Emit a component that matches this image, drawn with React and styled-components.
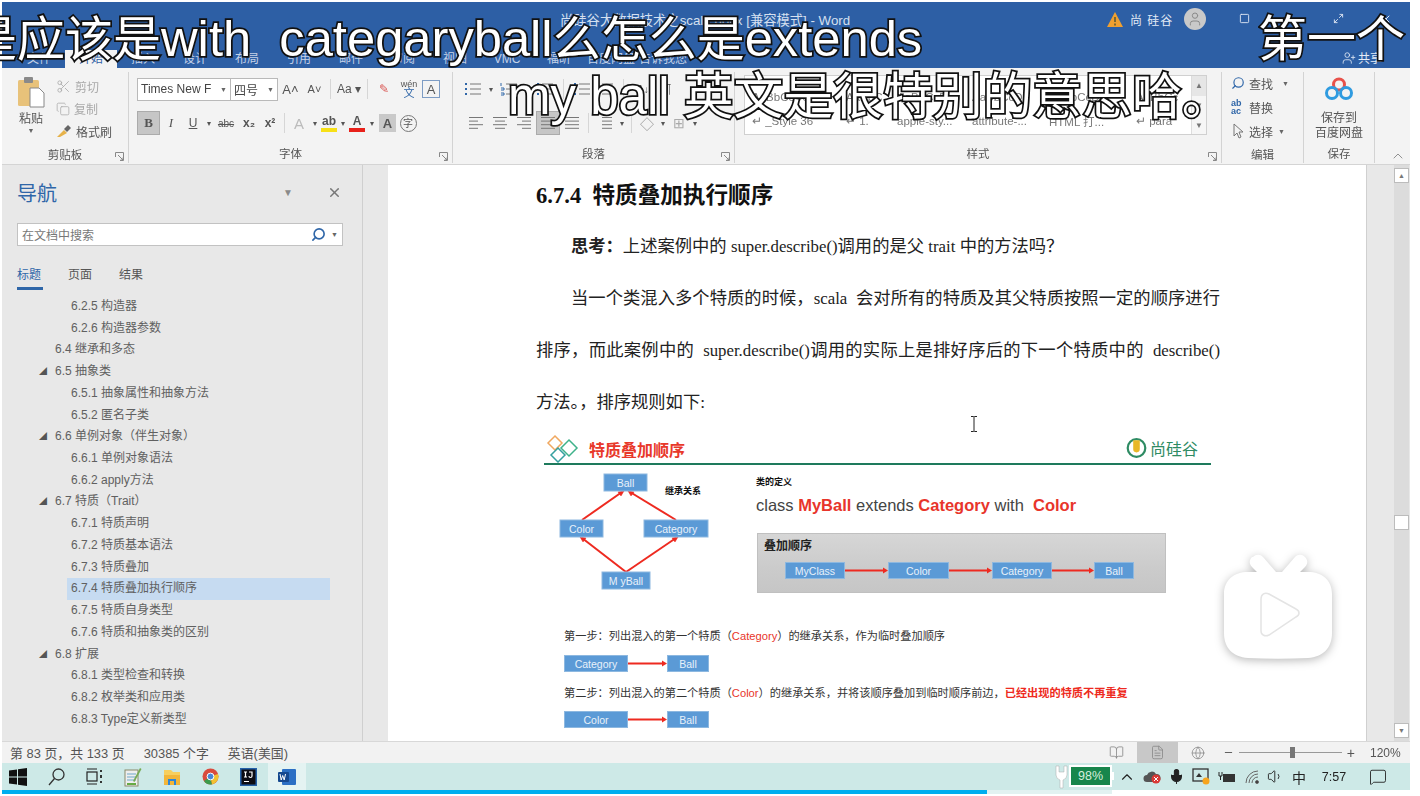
import React from 'react';
import styled, { createGlobalStyle } from 'styled-components';
import { Scissors, Copy, Search, ChevronUp, Minus, Square, X, Maximize2, UserPlus, User, Volume1, Mic, MessageSquare, BookOpen, FileText, Globe } from 'lucide-react';

const CJK = '"Liberation Sans", "Noto Sans CJK SC", sans-serif';
const SERIF = '"Liberation Serif", "Noto Sans CJK SC", serif';

const Global = createGlobalStyle`
  html, body { margin: 0; padding: 0; background: #fff; }
  body { font-family: ${CJK}; overflow: hidden; }
  * { box-sizing: border-box; }
`;

const Stage = styled.div`
  position: relative;
  width: 1420px;
  height: 796px;
  overflow: hidden;
  background: #fff;
  padding: 2px 10px 0 2px;
`;
const Win = styled.div`
  display: flex;
  flex-direction: column;
  height: 792px;
  filter: blur(0.35px);
  & > * { flex: none; }
`;

// title bar
const TitleBar = styled.div`
  height: 66px;
  background: #2d5fa5;
  color: #d5e0f0;
  font-size: 12px;
  display: flex;
  flex-direction: column;
`;
const TitleRow = styled.div`
  height: 30px;
  display: flex;
  align-items: center;
  padding-top: 4px;
`;
const Title = styled.div`
  margin-left: 558px;
  width: 293px;
  white-space: nowrap;
  font-size: 13.3px;
`;
const Account = styled.div`
  margin-left: 254px;
  display: flex;
  align-items: center;
  gap: 7px;
  color: #e4ebf6;
  white-space: nowrap;
  letter-spacing: 1px;
`;
const Avatar = styled.div`
  width: 22px;
  height: 22px;
  border-radius: 50%;
  background: #c9c9c9;
  margin-left: 4px;
  color: #8a8a8a;
  display: flex;
  align-items: center;
  justify-content: center;
`;
const WinBtns = styled.div`
  display: flex;
  margin-left: 15px;
`;
const WinBtn = styled.div`
  width: 47px;
  display: flex;
  justify-content: center;
  color: #dfe7f3;
`;
const TabRow = styled.div`
  flex: 1;
  display: flex;
  align-items: flex-end;
  padding-left: 11px;
`;
const Tab = styled.div`
  width: 52px;
  height: 18px;
  text-align: center;
  line-height: 18px;
  font-size: 12px;
  background: ${p => (p.$on ? '#f3f3f3' : 'transparent')};
  color: ${p => (p.$on ? '#2d5fa5' : '#c4d2e8')};
  white-space: nowrap;
`;
const Share = styled.div`
  margin-left: auto;
  margin-right: 28px;
  margin-bottom: 2px;
  display: flex;
  align-items: center;
  gap: 2px;
  color: #e4ebf6;
`;

// ribbon
const Ribbon = styled.div`
  height: 97px;
  background: #f3f3f3;
  border-bottom: 1px solid #d4d4d4;
  display: flex;
  padding-top: 4px;
  color: #555;
  font-size: 12px;
`;
const Group = styled.div`
  position: relative;
  width: ${p => p.$w}px;
  height: 91px;
  display: flex;
  flex-direction: column;
  border-right: 1px solid #d3d3d3;
`;
const GroupBody = styled.div`
  height: 70px;
  display: flex;
  padding: ${p => p.$pad || '0'};
  flex-direction: ${p => p.$dir || 'row'};
  align-items: ${p => p.$items || 'stretch'};
`;
const GroupLabel = styled.div`
  height: 18px;
  text-align: center;
  line-height: 18px;
  font-size: 11.5px;
  color: #555;
  margin-top: 4px;
`;
const Launcher = styled.svg`
  position: absolute;
  right: 4px;
  bottom: 2px;
`;
const Column = styled.div`
  display: flex;
  flex-direction: column;
  align-items: ${p => p.$align || 'flex-start'};
  gap: ${p => p.$gap || 0}px;
  margin-left: ${p => p.$ml || 0}px;
`;
const Row = styled.div`
  display: flex;
  align-items: center;
  height: ${p => p.$h || 22}px;
  gap: ${p => p.$gap || 0}px;
  margin-top: ${p => p.$mt || 0}px;
  margin-left: ${p => p.$ml || 0}px;
`;
const SmallItem = styled.div`
  display: flex;
  align-items: center;
  gap: 4px;
  height: 22px;
  color: ${p => (p.$dim ? '#a9a9a9' : '#555')};
  font-size: 12px;
  white-space: nowrap;
`;
const PasteLabel = styled.span`
  margin-top: 1px;
`;
const Field = styled.div`
  width: ${p => p.$w}px;
  height: 23px;
  border: 1px solid #b9b9b9;
  background: #fff;
  display: flex;
  align-items: center;
  padding: 0 3px;
  font-size: 12px;
  color: #444;
  white-space: nowrap;
  overflow: hidden;
  margin-left: -1px;
  &:first-child { margin-left: 0; }
`;
const Caret = styled.span`
  margin-left: ${p => (p.$ml === undefined ? 'auto' : p.$ml + 'px')};
  margin-top: ${p => p.$mt || 0}px;
  font-size: 7px;
  color: #666;
`;
const Tool = styled.div`
  width: ${p => p.$w || 22}px;
  height: ${p => p.$h || 24}px;
  display: flex;
  align-items: center;
  justify-content: center;
  font-family: ${p => (p.$serif ? SERIF : CJK)};
  font-weight: ${p => (p.$bold ? 700 : 400)};
  font-style: ${p => (p.$it ? 'italic' : 'normal')};
  text-decoration: ${p => (p.$un ? 'underline' : p.$strike ? 'line-through' : 'none')};
  background: ${p => (p.$on ? '#c6c6c6' : p.$bg || 'transparent')};
  border: ${p => (p.$on ? '1px solid #ababab' : p.$line ? '1px solid #7d9cc4' : 'none')};
  color: ${p => p.$color || '#555'};
  font-size: ${p => p.$fs || 12}px;
  flex: none;
`;
const Sep = styled.div`
  width: 1px;
  height: 20px;
  background: #d6d6d6;
  margin: 0 4px;
`;
const Swatch = styled.div`
  display: flex;
  flex-direction: column;
  align-items: center;
  font-size: 12px;
  line-height: 13px;
  font-weight: 700;
  color: #555;
  &::after {
    content: '';
    width: 16px;
    height: 4px;
    background: ${p => p.$c};
  }
`;
const Pinyin = styled.span`
  text-align: center;
  line-height: 9px;
  i { font-style: normal; font-size: 11px; color: #2f66a8; }
`;
const Circled = styled.span`
  border: 1px solid #777;
  border-radius: 50%;
  width: 17px;
  height: 17px;
  text-align: center;
  line-height: 15px;
`;
const Gallery = styled.div`
  margin: 3px 0 0 9px;
  width: 463px;
  height: 60px;
  background: #fff;
  border: 1px solid #d0d0d0;
  display: flex;
`;
const GalleryItems = styled.div`
  flex: 1;
  display: grid;
  grid-template-columns: 94px 51px 75px 77px 87px 1fr;
  grid-template-rows: 24px 24px;
  align-items: center;
  font-size: 11.5px;
  color: #777;
  padding: 9px 0 2px 7px;
  white-space: nowrap;
`;
const GalleryScroll = styled.div`
  width: 15px;
  border-left: 1px solid #ddd;
  display: grid;
  grid-template-rows: 1fr 1fr 1fr;
  color: #777;
  font-size: 8px;
  line-height: 20px;
  text-align: center;
  background: #f6f6f6;
`;
const GalleryUp = styled.span`
  background: #e6e6e6;
`;
const ReplaceMark = styled.span`
  font-size: 9px;
  line-height: 8px;
  color: #2f66a8;
  font-weight: 700;
  width: 14px;
`;
const SaveLabel = styled.div`
  text-align: center;
  line-height: 15px;
  font-size: 12px;
  color: #555;
  margin-top: 10px;
`;
const Collapse = styled.div`
  flex: 1;
  display: flex;
  justify-content: flex-end;
  align-items: flex-end;
  padding: 0 4px 0 0;
  height: 92px;
  color: #777;
`;

// main
const Main = styled.div`
  height: 576px;
  display: flex;
`;
const Nav = styled.div`
  width: 361px;
  background: #e8e8e8;
  border-right: 1px solid #cfcfcf;
  padding: 13px 20px 0 15px;
  color: #555;
`;
const NavHead = styled.div`
  display: flex;
  align-items: center;
  height: 28px;
  color: #2f66a8;
  font-size: 20px;
`;
const NavDrop = styled.span`
  margin-left: auto;
  margin-right: 34px;
  color: #8a8a8a;
  font-size: 10px;
`;
const SearchBox = styled.div`
  margin-top: 17px;
  height: 23px;
  width: 326px;
  background: #fff;
  border: 1px solid #c2c2c2;
  display: flex;
  align-items: center;
  padding: 0 4px;
  font-size: 12px;
  color: #777;
  gap: 2px;
`;
const NavTabs = styled.div`
  display: flex;
  margin-top: 19px;
  height: 26px;
  font-size: 12px;
`;
const NavTab = styled.div`
  width: 51px;
  color: ${p => (p.$on ? '#2f66a8' : '#555')};
  position: relative;
  &::after {
    content: '';
    display: ${p => (p.$on ? 'block' : 'none')};
    position: absolute;
    left: 0;
    top: 22px;
    width: 26px;
    height: 3px;
    background: #2f66a8;
  }
`;
const Tree = styled.div`
  margin-top: 5px;
  margin-right: 12px;
`;
const TreeRow = styled.div`
  height: 21.72px;
  line-height: 21.72px;
  font-size: 12px;
  color: #606060;
  white-space: nowrap;
  padding-left: ${p => (p.$on ? 4 : p.$lv === 3 ? 54 : 38)}px;
  margin-left: ${p => (p.$on ? 50 : 0)}px;
  background: ${p => (p.$on ? '#c6dbf1' : 'transparent')};
  position: relative;
`;
const TreeArrow = styled.span`
  position: absolute;
  left: 22px;
  top: 0;
  font-size: 8px;
  color: #555;
`;
const DocArea = styled.div`
  width: 1047px;
  display: flex;
  background: #e8e8e8;
`;
const Page = styled.div`
  margin-left: 25px;
  width: 978px;
  height: 576px;
  background: #fff;
  padding: 15px 0 0 148px;
  overflow: hidden;
  font-family: ${SERIF};
  color: #222;
  font-size: 17.3px;
`;
const Heading = styled.div`
  height: 31px;
  line-height: 31px;
  font-size: 22.6px;
  font-weight: 700;
  color: #111;
`;
const TextLine = styled.div`
  width: 684px;
  height: 52px;
  line-height: 52px;
  white-space: pre;
  margin-top: ${p => p.$mt || 0}px;
  padding-left: ${p => (p.$indent ? 35 : 0)}px;
  text-align: justify;
  text-align-last: ${p => (p.$just ? 'justify' : 'left')};
  b { font-weight: 700; }
`;
const En = styled.span`
  font-size: 16.8px;
`;
const Figure = styled.div`
  margin: 4px 0 0 8px;
  width: 667px;
  font-family: ${CJK};
`;
const FigHead = styled.div`
  height: 32px;
  border-bottom: 2px solid #1e7a5c;
  display: flex;
  align-items: center;
  padding: 0 13px 0 1px;
`;
const FigTitle = styled.div`
  margin-left: 10px;
  color: #e8382a;
  font-weight: 700;
  font-size: 16px;
  padding-top: 2px;
`;
const Brand = styled.div`
  margin-left: auto;
  display: flex;
  align-items: center;
  gap: 3px;
  color: #2e8b63;
  font-size: 16px;
`;
const FigTop = styled.div`
  display: flex;
  margin-top: 5px;
`;
const DefCol = styled.div`
  margin-left: 22px;
  display: flex;
  flex-direction: column;
`;
const DefLabel = styled.div`
  font-size: 9px;
  font-weight: 700;
  height: 14px;
  line-height: 14px;
  margin-top: 5px;
  color: #111;
`;
const DefLine = styled.div`
  margin-top: 5px;
  height: 22px;
  line-height: 22px;
  font-size: 16.5px;
  color: #444;
  white-space: pre;
  b { color: #e8352b; }
`;
const OrderPanel = styled.div`
  margin: 17px 0 0 1px;
  width: 409px;
  height: 60px;
  background: linear-gradient(180deg, #d6d6d6, #cbcbcb 60%, #c6c6c6);
  border: 1px solid #c0c0c0;
  padding: 4px 0 0 6px;
`;
const OrderLabel = styled.div`
  font-size: 12px;
  font-weight: 700;
  color: #222;
  height: 16px;
  line-height: 16px;
`;
const Flow = styled.div`
  display: flex;
  align-items: center;
  margin-left: ${p => p.$ml || 0}px;
  margin-top: ${p => p.$mt || 0}px;
`;
const Box = styled.div`
  width: ${p => p.$w}px;
  height: 17px;
  line-height: 16px;
  text-align: center;
  font-size: 10.5px;
  background: #5b9ad6;
  color: #e8f1fa;
  border: 1px solid #8db8e0;
  flex: none;
`;
const Steps = styled.div`
  padding-left: 20px;
  margin-top: 32px;
`;
const StepText = styled.div`
  height: 16px;
  line-height: 16px;
  font-size: 11.2px;
  color: #333;
  white-space: nowrap;
  margin-top: ${p => p.$mt || 0}px;
  em { font-style: normal; color: #e8352b; }
  b { color: #ee2a20; }
`;
const Scroll = styled.div`
  width: 44px;
  border-left: 1px solid #d0d0d0;
  padding: 0 1px 0 27px;
`;
const ScrollTrack = styled.div`
  width: 15px;
  height: 100%;
  background: #dcdcdc;
  padding: 3px 0;
  display: flex;
  flex-direction: column;
  align-items: center;
`;
const ScrollBtn = styled.div`
  width: 15px;
  height: 15px;
  background: #fff;
  border: 1px solid #bcbcbc;
  color: #777;
  font-size: 7px;
  line-height: 13px;
  text-align: center;
  margin-top: ${p => (p.$mt === undefined ? 0 : p.$mt)};
`;

// status bar
const Status = styled.div`
  height: 22px;
  background: #f2f2f2;
  border-top: 1px solid #d8d8d8;
  display: flex;
  align-items: center;
  padding-left: 8px;
  font-size: 12.9px;
  color: #555;
  white-space: pre;
`;
const StatusItem = styled.span`
  margin-right: 19px;
`;
const StatusRight = styled.div`
  margin-left: auto;
  display: flex;
  align-items: center;
  height: 100%;
  padding-right: 4px;
`;
const ViewBtn = styled.div`
  width: 41px;
  height: 100%;
  display: flex;
  align-items: center;
  justify-content: center;
  color: #888;
  background: ${p => (p.$on ? '#c8c8c8' : 'transparent')};
`;
const ZoomMinus = styled.span`
  display: flex;
  margin-left: 4px;
`;
const Slider = styled.div`
  position: relative;
  width: 103px;
  height: 1px;
  background: #999;
  margin: 0 5px;
  &::after {
    content: '';
    position: absolute;
    left: 51px;
    top: -5px;
    width: 5px;
    height: 11px;
    background: #777;
  }
`;
const ZoomPlus = styled.span`
  font-size: 14px;
`;
const Pct = styled.div`
  margin-left: 15px;
  width: 36px;
  font-size: 12px;
`;

// taskbar
const Taskbar = styled.div`
  height: 27px;
  background: #cde9e7;
  display: flex;
  align-items: center;
  padding-right: 3px;
`;
const TaskSlot = styled.div`
  width: ${p => p.$w || 38.4}px;
  height: 100%;
  flex: none;
  display: flex;
  align-items: center;
  justify-content: center;
  background: ${p => (p.$on ? '#e4f3f2' : 'transparent')};
  color: ${p => p.$color || '#222'};
  font-size: ${p => p.$fs || 12}px;
`;
const TaskLeft = styled.div`
  display: flex;
  height: 100%;
  margin-left: -3px;
`;
const Tray = styled.div`
  margin-left: auto;
  display: flex;
  height: 100%;
`;
const Battery = styled.div`
  position: relative;
  width: 43px;
  height: 22px;
  margin: 2px 2px 0 0;
  background: #17864c;
  border: 2px solid #fff;
  color: #d6eedd;
  font-size: 12.5px;
  line-height: 18px;
  text-align: center;
  &::after {
    content: '';
    position: absolute;
    right: -4px;
    top: 5px;
    width: 2px;
    height: 8px;
    background: #fff;
  }
`;
const Progress = styled.div`
  height: 4px;
  background: linear-gradient(90deg, #00aeef 985px, #e2f2f1 985px, #e2f2f1 1110px, transparent 1110px);
`;

// overlays
const Sub = styled.div`
  position: absolute;
  left: ${p => p.$x}px;
  top: ${p => p.$y}px;
  height: 52px;
  line-height: 52px;
  font-size: ${p => p.$fs || 48}px;
  font-family: ${CJK};
  color: #fff;
  white-space: pre;
  -webkit-text-stroke: 3.5px #111;
  paint-order: stroke fill;
`;
const SubEn = styled.span`
  font-size: ${p => p.$fs || 50.7}px;
`;
const IBeam = styled.svg`
  position: absolute;
  left: 970px;
  top: 416px;
`;
const TvMark = styled.svg`
  position: absolute;
  left: 1212px;
  top: 545px;
  filter: drop-shadow(0 2px 5px rgba(0, 0, 0, 0.28));
`;

const treeItems = [
  [3, '6.2.5 构造器'], [3, '6.2.6 构造器参数'], [2, '6.4 继承和多态'],
  [2, '6.5 抽象类', 1], [3, '6.5.1 抽象属性和抽象方法'], [3, '6.5.2 匿名子类'],
  [2, '6.6 单例对象（伴生对象）', 1], [3, '6.6.1 单例对象语法'], [3, '6.6.2 apply方法'],
  [2, '6.7 特质（Trait）', 1], [3, '6.7.1 特质声明'], [3, '6.7.2 特质基本语法'], [3, '6.7.3 特质叠加'],
  [3, '6.7.4 特质叠加执行顺序', 0, 1], [3, '6.7.5 特质自身类型'], [3, '6.7.6 特质和抽象类的区别'],
  [2, '6.8 扩展', 1], [3, '6.8.1 类型检查和转换'], [3, '6.8.2 枚举类和应用类'], [3, '6.8.3 Type定义新类型'],
];

const tabs = ['文件', '开始', '插入', '设计', '布局', '引用', '邮件', '审阅', '视图', 'VMC', '福昕', '百度网盘', '告诉我您'];
const styleItems = ['AaBbCcDc', 'AaBbC', 'AaBbCcDc', 'AaBbCcDc', 'AaBbCcDc', 'AaBbCc', '↵ _Style 36', '↵ 1.', 'apple-sty...', 'attribute-...', 'HTML 打...', '↵ para'];

const LauncherMark = () => (
  <Launcher width="9" height="9" viewBox="0 0 9 9" fill="none" stroke="#888">
    <path d="M.5 5V.5H8.5V8.5H5M3 3l5 5M5.5 8h2.5V5.5" />
  </Launcher>
);

const ListIcon = ({ w = 18, num }) => (
  <svg width={w} height="16" viewBox="0 0 18 16" stroke="#777" fill="none">
    <path d="M6 3h11M6 8h11M6 13h11" />
    {num ? <path d="M1 2v3M1 7h3v2H1M1 12h3v2H1" stroke="#2f66a8" /> : <path d="M1 3h2M1 8h2M1 13h2" stroke="#2f66a8" strokeWidth="2" />}
  </svg>
);

const AlignIcon = ({ lines, on }) => (
  <Tool $w={24} $on={on}>
    <svg width="16" height="14" viewBox="0 0 16 14" stroke="#777" fill="none">
      {lines.map((l, i) => (
        <path key={i} d={`M${l[0]} ${1.5 + i * 3.6}H${l[1]}`} />
      ))}
    </svg>
  </Tool>
);

const FlowArrow = ({ w }) => (
  <svg width={w} height="9" viewBox={`0 0 ${w} 9`} style={{ flex: 'none' }}>
    <path d={`M0 4.5H${w - 4}`} stroke="#ee2a20" strokeWidth="2" />
    <path d={`M${w - 5} 1.5L${w} 4.5L${w - 5} 7.5Z`} fill="#ee2a20" />
  </svg>
);

const DiamondDiagram = () => {
  const blue = '#5b9ad6';
  const boxes = [
    [60, 4, 43, 17, 'Ball'],
    [16, 50, 43, 17, 'Color'],
    [100, 50, 64, 17, 'Category'],
    [58, 102, 48, 17, 'M yBall'],
  ];
  return (
    <svg width="190" height="126" viewBox="0 0 190 126" style={{ flex: 'none' }}>
      <g stroke="#ee2a20" strokeWidth="2" fill="#ee2a20">
        <path d="M38 50L78 22" fill="none" />
        <path d="M132 50L86 22" fill="none" />
        <path d="M82 102L38 68" fill="none" />
        <path d="M82 102L132 68" fill="none" />
        <path d="M80 21l-6 1 3 4zM84 21l6 1-3 4zM36 67l6 1-3 4zM134 67l-6 1 3 4z" strokeWidth="0.5" />
      </g>
      {boxes.map(([x, y, w, h, t]) => (
        <g key={t}>
          <rect x={x} y={y} width={w} height={h} fill={blue} stroke="#8db8e0" />
          <text x={x + w / 2} y={y + 12.5} textAnchor="middle" fontSize="10.5" fill="#e8f1fa" fontFamily="Liberation Sans">{t}</text>
        </g>
      ))}
      <text x="121" y="24" fontSize="9" fontWeight="700" fill="#111" fontFamily="Noto Sans CJK SC">继承关系</text>
    </svg>
  );
};

export default function App() {
  return (
    <Stage>
      <Global />
      <Win>
        <TitleBar>
          <TitleRow>
            <Title>尚硅谷大数据技术之scala.docx [兼容模式] - Word</Title>
            <Account>
              <svg width="16" height="15" viewBox="0 0 16 15">
                <path d="M8 0L16 15H0Z" fill="#f0a030" />
                <path d="M8 5v5M8 11.5v2" stroke="#553" strokeWidth="1.5" />
              </svg>
              <span>尚 硅谷</span>
              <Avatar><User size={16} strokeWidth={1.5} /></Avatar>
            </Account>
            <WinBtns>
              <WinBtn><Square size={11} /></WinBtn>
              <WinBtn><Minus size={12} /></WinBtn>
              <WinBtn><Maximize2 size={11} /></WinBtn>
              <WinBtn><X size={12} /></WinBtn>
            </WinBtns>
          </TitleRow>
          <TabRow>
            {tabs.map((t, i) => <Tab key={t} $on={i === 1}>{t}</Tab>)}
            <Share><UserPlus size={14} strokeWidth={1.4} />共享</Share>
          </TabRow>
        </TitleBar>

        <Ribbon>
          <Group $w={127}>
            <GroupBody $pad="4px 0 0 15px">
              <Column $align="center">
                <svg width="28" height="32" viewBox="0 0 28 32">
                  <rect x="1" y="4" width="21" height="26" rx="1.5" fill="#e8c27a" />
                  <rect x="7" y="1" width="9" height="6" rx="1" fill="#8a8a8a" />
                  <path d="M13 12h9l5 5v14H13Z" fill="#fff" stroke="#888" />
                </svg>
                <PasteLabel>粘贴</PasteLabel>
                <Caret $ml={0} $mt={1}>▼</Caret>
              </Column>
              <Column $ml={11} $gap={1}>
                <SmallItem $dim><Scissors size={15} strokeWidth={1.3} />剪切</SmallItem>
                <SmallItem $dim><Copy size={14} strokeWidth={1.3} />复制</SmallItem>
                <SmallItem>
                  <svg width="16" height="14" viewBox="0 0 16 14">
                    <path d="M1 13l7-7 3 3-7 4z" fill="#e6b24a" />
                    <path d="M8 5l4-4 3 3-4 4z" fill="#666" />
                  </svg>
                  格式刷
                </SmallItem>
              </Column>
            </GroupBody>
            <GroupLabel>剪贴板</GroupLabel>
            <LauncherMark />
          </Group>

          <Group $w={324}>
            <GroupBody $pad="5px 0 0 8px">
              <Column>
                <Row $h={24}>
                  <Field $w={94}>Times New F<Caret>▼</Caret></Field>
                  <Field $w={48}>四号<Caret>▼</Caret></Field>
                  <Tool $fs={13} $w={25}>A˄</Tool>
                  <Tool $fs={11} $w={23}>A˅</Tool>
                  <Sep />
                  <Tool $w={28}>Aa ▾</Tool>
                  <Sep />
                  <Tool $color="#d9534f" $w={24}>✎</Tool>
                  <Tool $w={26} $fs={9}><Pinyin>wén<br /><i>文</i></Pinyin></Tool>
                  <Tool $w={18} $h={18} $fs={13} $line>A</Tool>
                </Row>
                <Row $h={24} $mt={10}>
                  <Tool $bold $on $serif $w={23} $fs={13}>B</Tool>
                  <Tool $it $serif $w={22} $fs={13}>I</Tool>
                  <Tool $un $w={22}>U</Tool>
                  <Tool $w={10} $fs={8}>▾</Tool>
                  <Tool $w={24} $fs={10} $strike>abc</Tool>
                  <Tool $bold $w={22}>x₂</Tool>
                  <Tool $bold $w={20}>x²</Tool>
                  <Sep />
                  <Tool $w={20} $fs={15} $color="#bbb">A</Tool>
                  <Tool $w={12} $fs={8}>▾</Tool>
                  <Swatch $c="#f7e017">ab</Swatch>
                  <Tool $w={12} $fs={8}>▾</Tool>
                  <Swatch $c="#e8211a">A</Swatch>
                  <Tool $w={14} $fs={8}>▾</Tool>
                  <Tool $w={17} $h={18} $fs={13} $bold $bg="#c9c9c9">A</Tool>
                  <Tool $w={24} $fs={10}><Circled>字</Circled></Tool>
                </Row>
              </Column>
            </GroupBody>
            <GroupLabel>字体</GroupLabel>
            <LauncherMark />
          </Group>

          <Group $w={282}>
            <GroupBody $pad="5px 0 0 11px">
              <Column>
                <Row $h={24} $gap={5}>
                  <ListIcon />
                  <Tool $w={8} $fs={8}>▾</Tool>
                  <ListIcon num />
                  <Tool $w={8} $fs={8}>▾</Tool>
                  <ListIcon />
                  <Sep />
                  <ListIcon />
                  <ListIcon />
                  <Sep />
                  <Tool $w={20} $fs={10}>A↓</Tool>
                  <Tool $w={20} $fs={12}>¶</Tool>
                </Row>
                <Row $h={24} $mt={10}>
                  <AlignIcon lines={[[1, 15], [1, 10], [1, 15], [1, 10]]} />
                  <AlignIcon lines={[[1, 15], [3, 13], [1, 15], [3, 13]]} />
                  <AlignIcon lines={[[1, 15], [6, 15], [1, 15], [6, 15]]} />
                  <AlignIcon on lines={[[1, 15], [1, 15], [1, 15], [1, 15]]} />
                  <AlignIcon lines={[[1, 15], [1, 15], [1, 15], [1, 15]]} />
                  <Sep />
                  <AlignIcon lines={[[5, 15], [5, 15], [5, 15], [5, 15]]} />
                  <Tool $w={10} $fs={8}>▾</Tool>
                  <Sep />
                  <Tool $w={22} $fs={14} $color="#999">◇</Tool>
                  <Tool $w={10} $fs={8}>▾</Tool>
                  <Tool $w={22} $fs={14} $color="#aaa">⊞</Tool>
                  <Tool $w={10} $fs={8}>▾</Tool>
                </Row>
              </Column>
            </GroupBody>
            <GroupLabel>段落</GroupLabel>
            <LauncherMark />
          </Group>

          <Group $w={487}>
            <GroupBody>
              <Gallery>
                <GalleryItems>
                  {styleItems.map((s, i) => <span key={i}>{s}</span>)}
                </GalleryItems>
                <GalleryScroll>
                  <GalleryUp>▲</GalleryUp>
                  <span>▼</span>
                  <span>▼</span>
                </GalleryScroll>
              </Gallery>
            </GroupBody>
            <GroupLabel>样式</GroupLabel>
            <LauncherMark />
          </Group>

          <Group $w={82}>
            <GroupBody $pad="0 0 0 9px">
              <Column $gap={2}>
                <SmallItem>
                  <Search size={14} color="#2f66a8" strokeWidth={2} style={{ transform: 'scaleX(-1)' }} />查找 <Caret $ml={5}>▼</Caret>
                </SmallItem>
                <SmallItem>
                  <ReplaceMark>ab<br />ac</ReplaceMark>替换
                </SmallItem>
                <SmallItem>
                  <svg width="14" height="16" viewBox="0 0 14 16" fill="none" stroke="#777"><path d="M3 1v12l3-3 2 5 2-1-2-5h4z" /></svg>
                  选择 <Caret $ml={1}>▼</Caret>
                </SmallItem>
              </Column>
            </GroupBody>
            <GroupLabel>编辑</GroupLabel>
          </Group>

          <Group $w={71}>
            <GroupBody $pad="5px 0 0 0" $dir="column" $items="center">
              <svg width="28" height="24" viewBox="0 0 28 24" fill="none">
                <circle cx="14" cy="7.5" r="5.5" stroke="#e8514a" strokeWidth="3" />
                <circle cx="7" cy="16" r="5.5" stroke="#2f9be0" strokeWidth="3" />
                <circle cx="21" cy="16" r="5.5" stroke="#2f9be0" strokeWidth="3" />
              </svg>
              <SaveLabel>保存到<br />百度网盘</SaveLabel>
            </GroupBody>
            <GroupLabel>保存</GroupLabel>
          </Group>
          <Collapse><ChevronUp size={16} strokeWidth={1.2} /></Collapse>
        </Ribbon>

        <Main>
          <Nav>
            <NavHead>
              导航
              <NavDrop>▼</NavDrop>
              <X size={15} color="#777" strokeWidth={2.4} />
            </NavHead>
            <SearchBox>
              在文档中搜索
              <Search size={15} color="#2f66a8" strokeWidth={2.6} style={{ marginLeft: 'auto', transform: 'scaleX(-1)' }} />
              <Caret $ml={3}>▼</Caret>
            </SearchBox>
            <NavTabs>
              <NavTab $on>标题</NavTab>
              <NavTab>页面</NavTab>
              <NavTab>结果</NavTab>
            </NavTabs>
            <Tree>
              {treeItems.map(([lv, text, arrow, on]) => (
                <TreeRow key={text} $lv={lv} $on={on}>
                  {arrow ? <TreeArrow>◢</TreeArrow> : null}
                  {text}
                </TreeRow>
              ))}
            </Tree>
          </Nav>
          <DocArea>
            <Page>
              <Heading>6.7.4&nbsp;&nbsp;特质叠加执行顺序</Heading>
              <TextLine $indent $mt={10}><b>思考：</b>上述案例中的 <En>super.describe()</En>调用的是父 <En>trait</En> 中的方法吗？</TextLine>
              <TextLine $indent $just>当一个类混入多个特质的时候，<En>scala</En>  会对所有的特质及其父特质按照一定的顺序进行</TextLine>
              <TextLine $just>排序，而此案例中的  <En>super.describe()</En>调用的实际上是排好序后的下一个特质中的  <En>describe()</En></TextLine>
              <TextLine>方法。，排序规则如下:</TextLine>
              <Figure>
                <FigHead>
                  <svg width="34" height="30" viewBox="0 0 34 30" fill="none" strokeWidth="1.5">
                    <path d="M10 3l7 7-7 7-7-7z" stroke="#f0a860" />
                    <path d="M24 7l8 8-8 8-8-8z" stroke="#3fb28a" />
                    <path d="M13 15l7 7-7 7-7-7z" stroke="#35a0a0" />
                  </svg>
                  <FigTitle>特质叠加顺序</FigTitle>
                  <Brand>
                    <svg width="21" height="22" viewBox="0 0 18 20">
                      <circle cx="9" cy="10" r="8" fill="none" stroke="#2e8b63" strokeWidth="2" />
                      <path d="M6 3v8a3 3 0 0 0 6 0V3Z" fill="#e8b828" />
                    </svg>
                    尚硅谷
                  </Brand>
                </FigHead>
                <FigTop>
                  <DiamondDiagram />
                  <DefCol>
                    <DefLabel>类的定义</DefLabel>
                    <DefLine>class <b>MyBall</b> extends <b>Category</b> with  <b>Color</b></DefLine>
                    <OrderPanel>
                      <OrderLabel>叠加顺序</OrderLabel>
                      <Flow $ml={21} $mt={8}>
                        <Box $w={60}>MyClass</Box>
                        <FlowArrow w={43} />
                        <Box $w={61}>Color</Box>
                        <FlowArrow w={43} />
                        <Box $w={60}>Category</Box>
                        <FlowArrow w={42} />
                        <Box $w={40}>Ball</Box>
                      </Flow>
                    </OrderPanel>
                  </DefCol>
                </FigTop>
                <Steps>
                  <StepText>第一步：列出混入的第一个特质（<em>Category</em>）的继承关系，作为临时叠加顺序</StepText>
                  <Flow $mt={11}>
                    <Box $w={64}>Category</Box>
                    <FlowArrow w={39} />
                    <Box $w={42}>Ball</Box>
                  </Flow>
                  <StepText $mt={13}>第二步：列出混入的第二个特质（<em>Color</em>）的继承关系，并将该顺序叠加到临时顺序前边，<b>已经出现的特质不再重复</b></StepText>
                  <Flow $mt={10}>
                    <Box $w={64}>Color</Box>
                    <FlowArrow w={39} />
                    <Box $w={42}>Ball</Box>
                  </Flow>
                </Steps>
              </Figure>
            </Page>
            <Scroll>
              <ScrollTrack>
                <ScrollBtn>▲</ScrollBtn>
                <ScrollBtn $mt="332px"></ScrollBtn>
                <ScrollBtn $mt="auto">▼</ScrollBtn>
              </ScrollTrack>
            </Scroll>
          </DocArea>
        </Main>

        <Status>
          <StatusItem>第 83 页，共 133 页</StatusItem>
          <StatusItem>30385 个字</StatusItem>
          <span>英语(美国)</span>
          <StatusRight>
            <ViewBtn><BookOpen size={15} strokeWidth={1.3} /></ViewBtn>
            <ViewBtn $on><FileText size={15} strokeWidth={1.3} /></ViewBtn>
            <ViewBtn><Globe size={14} strokeWidth={1.3} /></ViewBtn>
            <ZoomMinus><Minus size={11} /></ZoomMinus>
            <Slider />
            <ZoomPlus>+</ZoomPlus>
            <Pct>120%</Pct>
          </StatusRight>
        </Status>

        <Taskbar>
          <TaskLeft>
            <TaskSlot>
              <svg width="18" height="18" viewBox="0 0 18 18" fill="#111">
                <path d="M0 2.500L8 1.400V8.400H0ZM9 1.200L18 0V8.400H9ZM0 9.600H8V16.600L0 15.500ZM9 9.600H18V18L9 16.800Z" />
              </svg>
            </TaskSlot>
            <TaskSlot>
              <svg width="17" height="18" viewBox="0 0 17 18" fill="none" stroke="#333" strokeWidth="1.3">
                <circle cx="10.500" cy="6.500" r="5.500" /><path d="M6.500 10.500L1 17" />
              </svg>
            </TaskSlot>
            <TaskSlot>
              <svg width="17" height="17" viewBox="0 0 17 17" fill="none" stroke="#222" strokeWidth="1.2">
                <rect x="1" y="4" width="10" height="9" /><path d="M1 1h10M1 16h10" /><path d="M15 2v2M15 7v3M15 13v2" strokeWidth="1.8" />
              </svg>
            </TaskSlot>
            <TaskSlot>
              <svg width="18" height="20" viewBox="0 0 18 20">
                <rect x="1" y="3" width="13" height="16" fill="#eee" stroke="#8a8a6a" />
                <path d="M3 7h9M3 10h9M3 13h9" stroke="#6ea7c8" />
                <path d="M9 14L16 1l1.500 1L10.500 15Z" fill="#7a5" />
                <path d="M3 17h9" stroke="#6a4" strokeWidth="2" />
              </svg>
            </TaskSlot>
            <TaskSlot>
              <svg width="18" height="18" viewBox="0 0 18 18">
                <path d="M1 2h7l2 2h7v13H1Z" fill="#f7cf5e" />
                <path d="M1 7h16v10H1Z" fill="#f2b63a" />
                <path d="M5 17v-6h8v6h-2v-4H7v4Z" fill="#2f86d6" />
              </svg>
            </TaskSlot>
            <TaskSlot>
              <svg width="17" height="17" viewBox="0 0 17 17">
                <circle cx="8.500" cy="8.500" r="8" fill="#d94b3d" />
                <path d="M8.500 8.500L2 13a8 8 0 0 0 8 3.400Z" fill="#3b9c4c" />
                <path d="M8.500 8.500L16 6a8 8 0 0 1-6 10.400Z" fill="#f2c230" />
                <circle cx="8.500" cy="8.500" r="3.400" fill="#4a87d6" stroke="#fff" />
              </svg>
            </TaskSlot>
            <TaskSlot>
              <svg width="17" height="18" viewBox="0 0 17 18">
                <rect x="0" y="0" width="17" height="18" fill="#2460a8" />
                <rect x="1.500" y="1.500" width="14" height="15" fill="#0c0c14" />
                <path d="M4 4h3M5.500 4v5M4 9h3M9 4h3v4a1.500 1.500 0 0 1-3 0M4 13.500h5" stroke="#fff" strokeWidth="1.2" fill="none" />
              </svg>
            </TaskSlot>
            <TaskSlot $on>
              <svg width="18" height="18" viewBox="0 0 18 18">
                <rect x="4" y="1" width="14" height="16" rx="1" fill="#2b6fc4" />
                <rect x="0" y="4" width="11" height="10" rx="1" fill="#15488f" />
                <path d="M2 6l1.200 6 1.500-4.500L6.200 12 7.500 6" stroke="#fff" fill="none" strokeWidth="1" />
              </svg>
            </TaskSlot>
          </TaskLeft>
          <Tray>
            <TaskSlot $w={16}>
              <svg width="15" height="24" viewBox="0 0 15 24" fill="#fff" stroke="#aaa" strokeWidth="0.5">
                <path d="M2 1h3v6h5V1h3v9a5.500 5.500 0 0 1-4 5v8H6v-8a5.500 5.500 0 0 1-4-5Z" />
              </svg>
            </TaskSlot>
            <Battery>98%</Battery>
            <TaskSlot $w={26}><ChevronUp size={18} strokeWidth={1.5} /></TaskSlot>
            <TaskSlot $w={24}>
              <svg width="18" height="15" viewBox="0 0 18 15">
                <path d="M4 13a3.500 3.500 0 0 1 0-7 5 5 0 0 1 9-1 4 4 0 0 1 1 8Z" fill="#555" />
                <circle cx="13" cy="10" r="4.500" fill="#d93a36" />
                <path d="M11 8l4 4M15 8l-4 4" stroke="#fff" />
              </svg>
            </TaskSlot>
            <TaskSlot $w={25}><Mic size={17} strokeWidth={1.5} fill="#222" /></TaskSlot>
            <TaskSlot $w={23}>
              <svg width="18" height="17" viewBox="0 0 18 17">
                <rect x="1" y="1" width="15" height="12" fill="none" stroke="#333" strokeWidth="1.3" />
                <path d="M4 9l3-4 3 4z" fill="#333" />
                <circle cx="14" cy="13" r="3.500" fill="#f7a41d" />
              </svg>
            </TaskSlot>
            <TaskSlot $w={30}>
              <svg width="18" height="12" viewBox="0 0 18 12">
                <rect x="5" y="3" width="12" height="8" fill="#333" />
                <path d="M1 1v4h3V1M2.500 5v4" stroke="#222" fill="none" />
              </svg>
            </TaskSlot>
            <TaskSlot $w={20}>
              <svg width="15" height="14" viewBox="0 0 15 14" fill="none" stroke="#666">
                <path d="M1 13A12 12 0 0 1 13 1M4 13a9 9 0 0 1 9-9M7 13a6 6 0 0 1 6-6" /><circle cx="12" cy="12" r="1.500" fill="#333" />
              </svg>
            </TaskSlot>
            <TaskSlot $w={26}><Volume1 size={17} strokeWidth={1.3} /></TaskSlot>
            <TaskSlot $w={22} $fs={14}>中</TaskSlot>
            <TaskSlot $w={48} $fs={12.5}>7:57</TaskSlot>
            <TaskSlot $w={40}><MessageSquare size={18} strokeWidth={1.2} /></TaskSlot>
            <TaskSlot $w={9} />
          </Tray>
        </Taskbar>
        <Progress />
      </Win>

      <Sub $x={-31} $y={13}>是应该是<SubEn>with  categaryball</SubEn>么怎么是<SubEn>extends</SubEn></Sub>
      <Sub $x={1258} $y={13} $fs={49}>第一个</Sub>
      <Sub $x={508} $y={71} $fs={49.8}><SubEn $fs={51}>my ball </SubEn>英文是很特别的意思哈。</Sub>

      <IBeam width="8" height="16" viewBox="0 0 8 16" fill="none" stroke="#222">
        <path d="M1 .5h2.500L4 1l.5-.5H7M4 1v14M1 15.500h2.500L4 15l.5.500H7" />
      </IBeam>
      <TvMark width="132" height="128" viewBox="0 0 132 128">
        <path d="M41 12c3-3 7-3 10 0l13 15h6L83 12c3-3 7-3 10 0 3 3 3 7 0 10l-5 5h8c14 0 24 8 24 22v39c0 15-9 24-24 25-20 1-40 1-60 0-15-1-24-10-24-25V49c0-14 10-22 24-22h9l-5-5c-3-3-3-7 0-10Z" fill="#fff" />
        <path d="M49 54c0-5 4-7 8-5l27 15c4 2 4 6 0 8L57 90c-4 2-8 0-8-4Z" fill="#fff" stroke="#e4e4e4" strokeWidth="1.5" />
      </TvMark>
    </Stage>
  );
}
